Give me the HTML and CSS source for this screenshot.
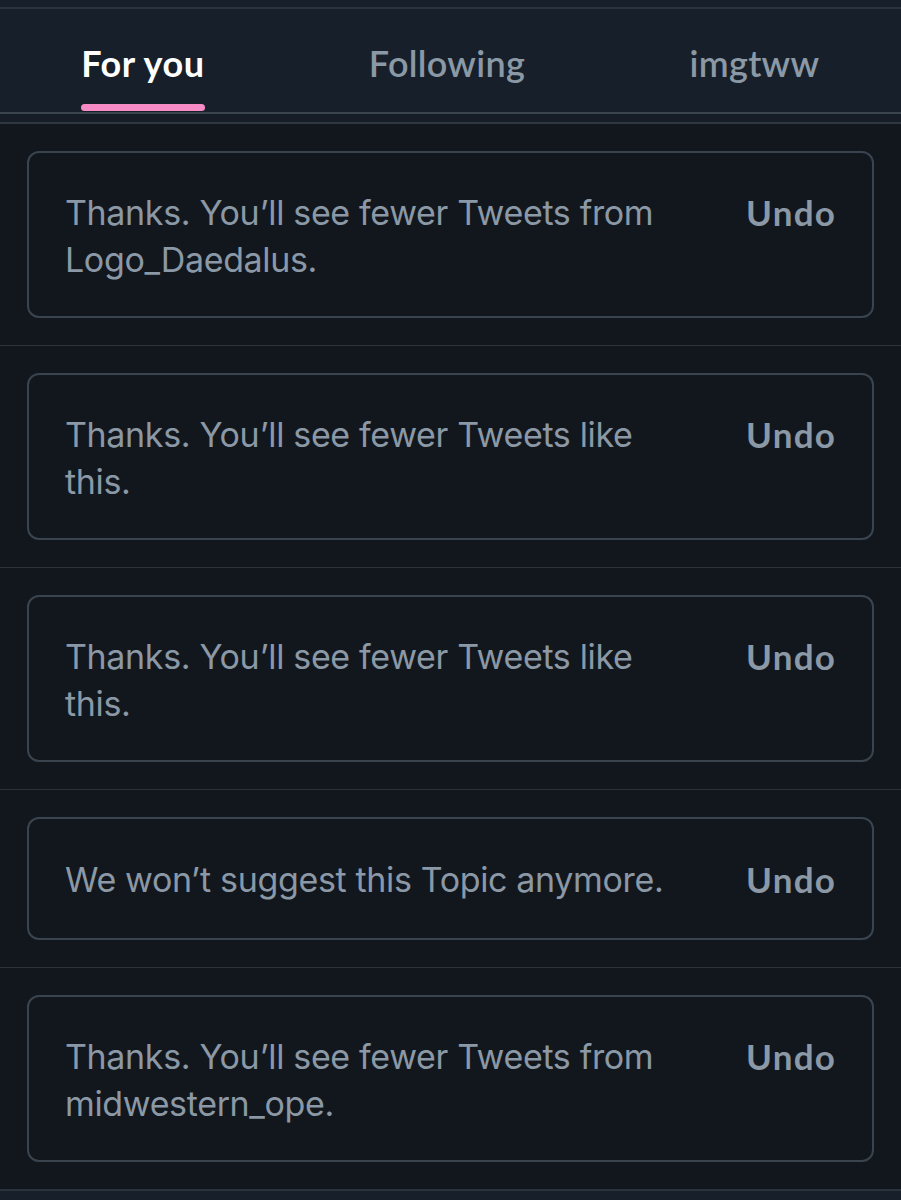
FILE: index.html
```html
<!DOCTYPE html>
<html>
<head>
<meta charset="utf-8">
<link rel="stylesheet" href="styles.css">
</head>
<body>
<div class="page">
  <header class="header">
    <nav class="tabs">
      <div class="tab active"><span class="tab-label">For you<span class="tab-bar"></span></span></div>
      <div class="tab"><span class="tab-label">Following</span></div>
      <div class="tab"><span class="tab-label">imgtww</span></div>
    </nav>
    <div class="header-strip"></div>
  </header>
  <main class="feed">
    <section class="row">
      <div class="notice">
        <p class="msg">Thanks. You’ll see fewer Tweets from Logo_Daedalus.</p>
        <span class="undo">Undo</span>
      </div>
    </section>
    <section class="row">
      <div class="notice">
        <p class="msg">Thanks. You’ll see fewer Tweets like this.</p>
        <span class="undo">Undo</span>
      </div>
    </section>
    <section class="row">
      <div class="notice">
        <p class="msg">Thanks. You’ll see fewer Tweets like this.</p>
        <span class="undo">Undo</span>
      </div>
    </section>
    <section class="row">
      <div class="notice notice-short">
        <p class="msg">We won’t suggest this Topic anymore.</p>
        <span class="undo">Undo</span>
      </div>
    </section>
    <section class="row">
      <div class="notice">
        <p class="msg">Thanks. You’ll see fewer Tweets from midwestern_ope.</p>
        <span class="undo">Undo</span>
      </div>
    </section>
  </main>
  <div class="footer-fill"></div>
</div>
</body>
</html>
```
FILE: styles.css
```css
html, body {
  margin: 0;
  padding: 0;
  background: #12171e;
}
.page {
  width: 901px;
  height: 1200px;
  overflow: hidden;
  display: flex;
  flex-direction: column;
  background: #12171e;
}
.header {
  background: #17202a;
  padding-top: 7px;
}
.tabs {
  display: grid;
  grid-template-columns: 286px 322px 293px;
  height: 107px;
  border-top: 2px solid #2a333d;
  border-bottom: 2px solid #3a444f;
  box-sizing: border-box;
}
.tab {
  display: flex;
  justify-content: center;
  align-items: flex-start;
  padding-top: 33px;
  font-family: "Lato", "Open Sans", sans-serif;
  font-size: 36px;
  font-weight: 600;
  color: #8b98a5;
  letter-spacing: 0.3px;
}
.tab.active {
  color: #ffffff;
  font-weight: 700;
  letter-spacing: 0.6px;
}
.tab-label {
  position: relative;
  line-height: 42px;
}
.tab-bar {
  position: absolute;
  left: 0;
  right: 0;
  top: 62px;
  height: 7px;
  border-radius: 4px;
  background: #f78bc6;
}
.header-strip {
  height: 8px;
  border-bottom: 2px solid #2e3842;
  background: #161d26;
}
.feed {
  display: flex;
  flex-direction: column;
}
.row {
  padding: 27px 27px 27px 27px;
  border-bottom: 1px solid #2a333c;
}
.notice {
  display: flex;
  justify-content: space-between;
  align-items: flex-start;
  border: 2px solid #3a444f;
  border-radius: 12px;
  padding: 36px 36px 33px 36px;
}
.notice-short {
  padding-top: 37px;
  padding-bottom: 35px;
}
.msg {
  margin: 0;
  width: 625px;
  font-family: "Inter", "Open Sans", sans-serif;
  font-size: 34px;
  line-height: 47px;
  color: #8b98a5;
  letter-spacing: -0.35px;
}
.undo {
  font-family: "Lato", "Open Sans", sans-serif;
  font-weight: 700;
  font-size: 35px;
  line-height: 47px;
  color: #8b98a5;
  letter-spacing: 1.2px;
}
.footer-fill {
  flex: 1;
  background: #17202a;
  border-top: 1px solid #2a333c;
}
```
